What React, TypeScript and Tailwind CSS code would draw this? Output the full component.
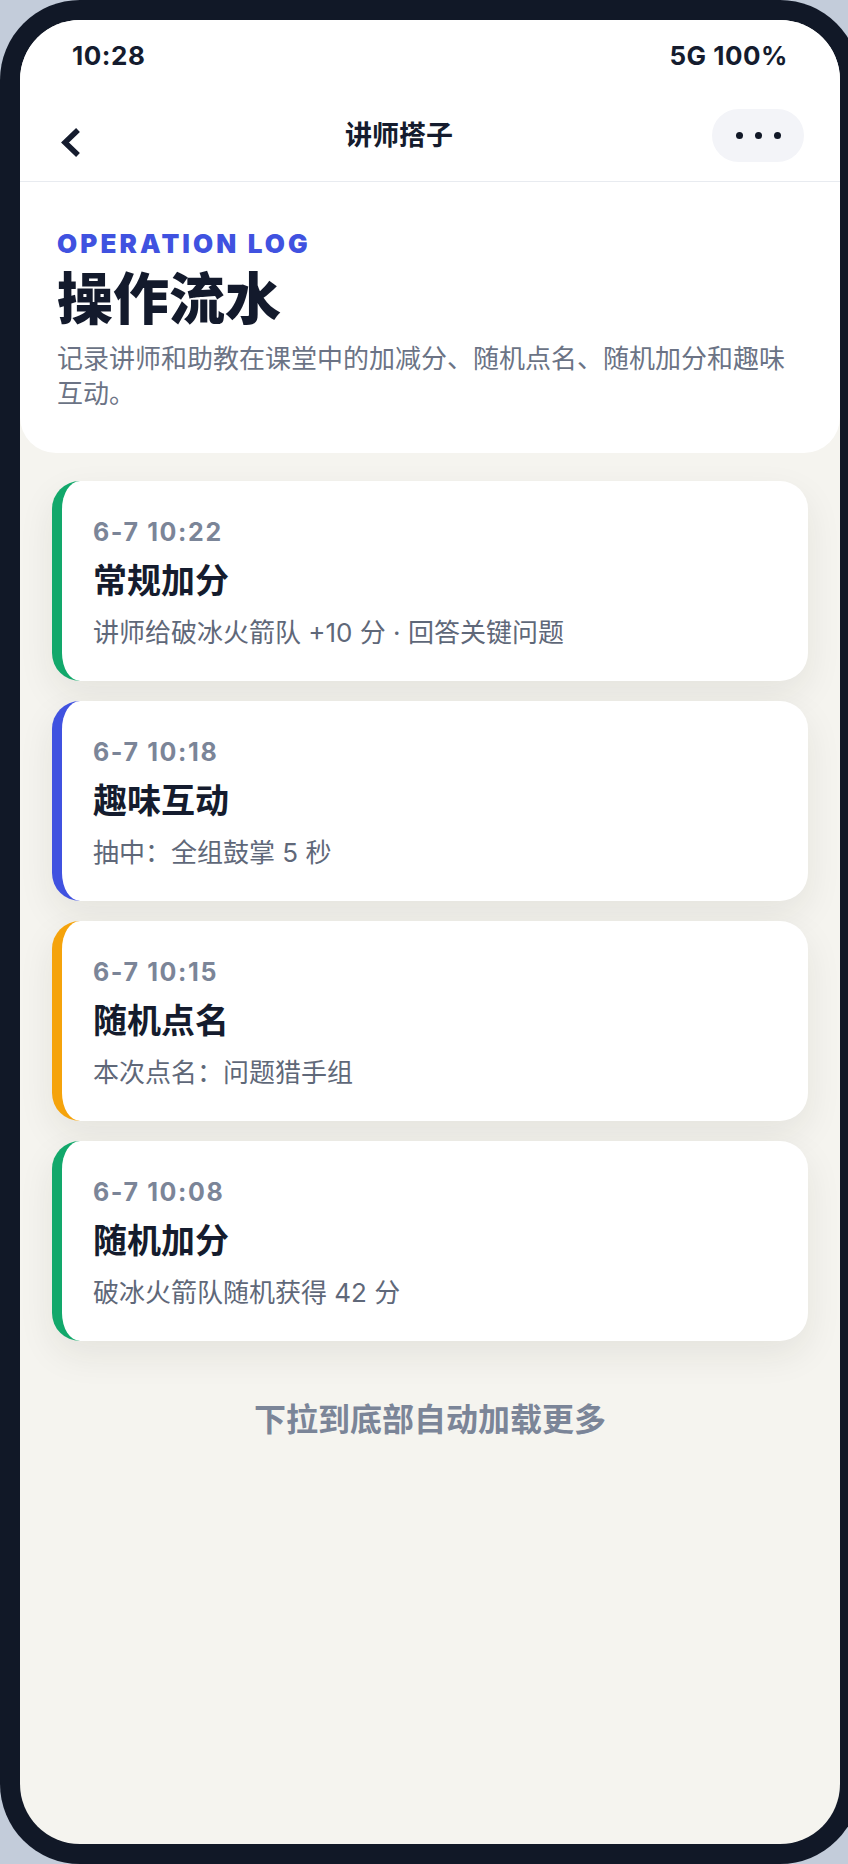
import React from "react";

type Log = { time: string; title: string; desc: string; accent: string };

const logs: Log[] = [
  { time: "6-7 10:22", title: "常规加分", desc: "讲师给破冰火箭队 +10 分 · 回答关键问题", accent: "border-[#12a86b]" },
  { time: "6-7 10:18", title: "趣味互动", desc: "抽中：全组鼓掌 5 秒", accent: "border-[#4052e0]" },
  { time: "6-7 10:15", title: "随机点名", desc: "本次点名：问题猎手组", accent: "border-[#f5a30b]" },
  { time: "6-7 10:08", title: "随机加分", desc: "破冰火箭队随机获得 42 分", accent: "border-[#12a86b]" },
];

function LogCard({ log }: { log: Log }) {
  return (
    <div
      className={`h-[200px] rounded-[28px] border-l-[10px] ${log.accent} bg-white pl-[31px] pr-8 pt-[33px] shadow-[0_14px_36px_rgba(40,38,25,0.08)]`}
    >
      <div className="text-[25px] font-bold leading-[36px] tracking-[0.065em] text-[#7b8598]">{log.time}</div>
      <div className="mt-[11px] text-[34px] font-bold leading-[40px] text-[#151c2e]">{log.title}</div>
      <div className="mt-[14px] text-[26px] leading-[36px] text-[#5f6879]">{log.desc}</div>
    </div>
  );
}

export default function App() {
  return (
    <div className="h-[1864px] w-full overflow-hidden bg-[#c3ccda] font-[Inter,'Noto_Sans_CJK_SC',sans-serif]">
      <div className="h-[1864px] w-[860px] rounded-[80px] bg-[#111827] p-[20px]">
        <div className="flex h-full flex-col overflow-hidden rounded-[60px] bg-[#f5f4ef]">
          <div className="rounded-b-[36px] bg-white">
            {/* status bar */}
            <div className="flex h-[70px] items-center justify-between pl-[52px] pr-[52px] text-[26px] font-bold tracking-[0.02em] text-[#151c2e]">
              <span>10:28</span>
              <span>5G 100%</span>
            </div>
            {/* nav */}
            <div className="flex h-[92px] items-center border-b border-[#e8ebf0] pl-[40px] pr-[36px]">
              <div className="flex w-[26px] items-center pt-[14px]">
                <svg width="21" height="31" viewBox="0 0 21 31" fill="none">
                  <polyline
                    points="18,3 5,15.5 18,28"
                    stroke="#151c2e"
                    strokeWidth="5.5"
                    strokeLinecap="butt"
                    strokeLinejoin="miter"
                  />
                </svg>
              </div>
              <div className="flex-1 pt-[2px] text-center text-[27px] font-bold text-[#151c2e]">讲师搭子</div>
              <div className="flex h-[53px] w-[92px] items-center justify-center gap-[12px] rounded-full bg-[#f3f4f8]">
                <span className="h-[7px] w-[7px] rounded-full bg-[#111827]" />
                <span className="h-[7px] w-[7px] rounded-full bg-[#111827]" />
                <span className="h-[7px] w-[7px] rounded-full bg-[#111827]" />
              </div>
            </div>
            {/* header */}
            <div className="px-[37px] pb-[42px] pt-[47px]">
              <div className="text-[26px] font-black leading-[30px] tracking-[0.12em] text-[#4052e0]">OPERATION LOG</div>
              <h1 className="mt-[8px] text-[56px] font-black leading-[64px] text-[#131a2c]">操作流水</h1>
              <p className="mt-[10px] text-[26px] leading-[35px] text-[#6b7385]">
                记录讲师和助教在课堂中的加减分、随机点名、随机加分和趣味互动。
              </p>
            </div>
          </div>
          <div className="flex flex-col gap-[20px] px-[32px] pt-[28px]">
            {logs.map((l) => (
              <LogCard key={l.time} log={l} />
            ))}
          </div>
          <div className="mt-[59px] text-center text-[32px] font-bold leading-[40px] text-[#7b8598]">
            下拉到底部自动加载更多
          </div>
        </div>
      </div>
    </div>
  );
}
